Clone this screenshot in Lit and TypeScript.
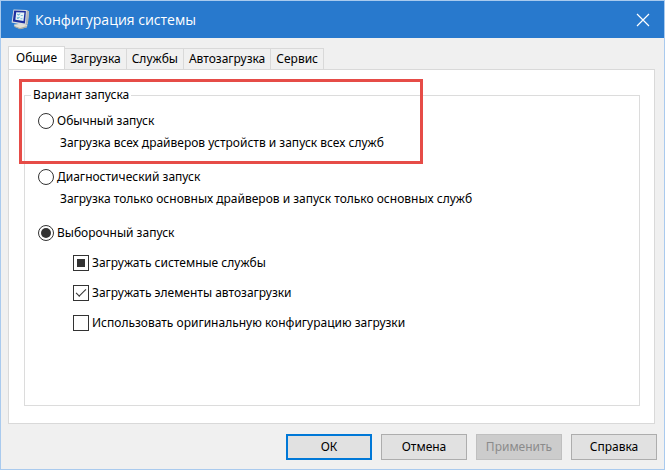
import { LitElement, html, css, svg } from "lit";
import { customElement, state } from "lit/decorators.js";
import { classMap } from "lit/directives/class-map.js";

const TABS = ["Общие", "Загрузка", "Службы", "Автозагрузка", "Сервис"];

const MODES = [
  {
    id: "normal",
    label: "Обычный запуск",
    note: "Загрузка всех драйверов устройств и запуск всех служб",
  },
  {
    id: "diagnostic",
    label: "Диагностический запуск",
    note: "Загрузка только основных драйверов и запуск только основных служб",
  },
  { id: "selective", label: "Выборочный запуск", note: "" },
];

const LOADS = [
  { id: "services", label: "Загружать системные службы", checked: false, mixed: true },
  { id: "startup", label: "Загружать элементы автозагрузки", checked: true, mixed: false },
  {
    id: "boot",
    label: "Использовать оригинальную конфигурацию загрузки",
    checked: false,
    mixed: false,
  },
];

const appIcon = svg`
  <path d="M3 15.5 L13 14.5 L16.5 16.5 L15.5 18.5 L9 20 L3.5 17.5 Z" fill="#e2e1d6" />
  <path d="M3.5 17 L9 19 L16 17 L15.5 18.5 L9 20.2 L3.5 18 Z" fill="#a9aaa2" />
  <path d="M2.5 0.5 L15.5 1 L18 2.6 L16.8 15 L14.6 16.4 L0.6 13.4 Z" fill="#d9dcdf" />
  <path d="M15.8 1.2 L18 2.6 L16.8 15 L14.6 16.4 Z" fill="#aeb2b6" />
  <path d="M3.2 1.4 L14.9 2 L13.9 14.6 L1.8 12.4 Z" fill="#1c2fa0" />
  <path d="M5.2 3.2 L13.4 3.6 L12.5 12 L4.4 10.8 Z" fill="#e4f3f8" />
  <path d="M6.3 5.2 L7.6 6.1 L8.8 4.6 M5.9 8.6 L7.2 9.5 L8.4 7.9" fill="none" stroke="#2f9ac4" />
  <path d="M9.8 6.5 H11.8 M9.5 9.7 H11.4" stroke="#7fbfd8" />`;

@customElement("app-root")
export class AppRoot extends LitElement {
  @state() private mode = "selective";
  @state() private tab = 0;

  static styles = css`
    :host {
      display: flex;
      flex-direction: column;
      box-sizing: border-box;
      min-height: 100vh;
      border: 1px solid #a9caee;
      background: #f0f0f0;
      color: #000;
      font: 12px/16px "Noto Sans", "Open Sans", sans-serif;
    }
    .titlebar {
      display: flex;
      align-items: center;
      height: 37px;
      padding: 0 14px 0 10px;
      background: #2879cd;
      color: #fff;
    }
    .app-icon {
      width: 19px;
      height: 21px;
    }
    .title {
      flex: 1;
      margin: 0 0 0 5px;
      font: 14px/20px "Open Sans", "Noto Sans", sans-serif;
    }
    .close {
      display: flex;
      padding: 0;
      border: 0;
      background: none;
      color: inherit;
    }
    .close-icon {
      width: 14px;
      height: 14px;
    }
    .tabs {
      display: flex;
      align-items: flex-end;
      padding: 8px 0 0 7px;
    }
    .tab {
      height: 21px;
      padding: 0 5px;
      border: 1px solid #d9d9d9;
      border-width: 1px 1px 0 0;
      background: #f0f0f0;
      color: inherit;
      font: inherit;
    }
    .tab.active {
      position: relative;
      height: 24px;
      margin-bottom: -1px;
      padding: 0 7px 2px;
      border-left-width: 1px;
      background: #fff;
    }
    .panel {
      position: relative;
      display: flex;
      flex: 1;
      margin: 0 9px 0 7px;
      padding: 17px 14px 17px 15px;
      border: 1px solid #d9d9d9;
      background: #fff;
    }
    .group {
      flex: 1;
      min-width: 0;
      margin: 0;
      padding: 10px 13px;
      border: 1px solid #dcdcdc;
    }
    .legend {
      margin-left: -7px;
      padding: 0 2px;
    }
    .mode {
      margin-bottom: 18px;
    }
    .mode:last-of-type {
      margin-bottom: 14px;
    }
    .option {
      display: flex;
      align-items: center;
      gap: 3px;
    }
    .note {
      margin: 6px 0 0 22px;
    }
    .radio,
    .check {
      display: grid;
      place-items: center;
      flex: none;
      box-sizing: border-box;
      width: 16px;
      height: 16px;
      margin: 0;
      border: 1px solid #333;
      background: #fff;
      appearance: none;
    }
    .radio {
      border-radius: 50%;
    }
    .radio:checked::before {
      width: 10px;
      height: 10px;
      border-radius: 50%;
      background: #333;
      content: "";
    }
    .check:indeterminate::before {
      width: 8px;
      height: 8px;
      background: #333;
      content: "";
    }
    .check:checked::before {
      width: 9px;
      height: 4px;
      margin-bottom: 3px;
      border: solid #333;
      border-width: 0 0 1px 1px;
      transform: rotate(-45deg);
      content: "";
    }
    .loads {
      display: flex;
      flex-direction: column;
      gap: 14px;
      padding-left: 35px;
    }
    .highlight {
      position: absolute;
      top: 9px;
      left: 10px;
      box-sizing: border-box;
      width: 404px;
      height: 85px;
      border: 3px solid #e64c47;
      pointer-events: none;
    }
    .actions {
      display: flex;
      justify-content: flex-end;
      gap: 9px;
      padding: 10px 7px 9px;
    }
    .action {
      width: 86px;
      height: 26px;
      padding: 0;
      border: 1px solid #adadad;
      background: #e1e1e1;
      color: inherit;
      font: inherit;
    }
    .action.primary {
      border: 2px solid #0078d7;
    }
    .action:disabled {
      border-color: #bfbfbf;
      background: #ccc;
      color: #8b8b8b;
    }
  `;

  render() {
    return html`
      <header class="titlebar">
        <svg class="app-icon" viewBox="0 0 19 21" aria-hidden="true">${appIcon}</svg>
        <h1 class="title">Конфигурация системы</h1>
        <button class="close" aria-label="Закрыть">
          <svg class="close-icon" viewBox="0 0 14 14" aria-hidden="true">
            <path d="M1 1 L13 13 M13 1 L1 13" stroke="#fff" stroke-width="1.2" />
          </svg>
        </button>
      </header>
      <div class="tabs" role="tablist">
        ${TABS.map(
          (name, i) => html`<button
            class=${classMap({ tab: true, active: i === this.tab })}
            role="tab"
            aria-selected=${i === this.tab}
            @click=${() => (this.tab = i)}
          >${name}</button>`
        )}
      </div>
      <main class="panel" role="tabpanel">
        <fieldset class="group">
          <legend class="legend">Вариант запуска</legend>
          ${MODES.map(
            (m) => html`<div class="mode">
              <label class="option">
                <input
                  class="radio"
                  type="radio"
                  name="mode"
                  .checked=${this.mode === m.id}
                  @change=${() => (this.mode = m.id)}
                />
                <span>${m.label}</span>
              </label>
              ${m.note ? html`<p class="note">${m.note}</p>` : null}
            </div>`
          )}
          <section class="loads">
            ${LOADS.map(
              (l) => html`<label class="option">
                <input
                  class="check"
                  type="checkbox"
                  name=${l.id}
                  .checked=${l.checked}
                  .indeterminate=${l.mixed}
                />
                <span>${l.label}</span>
              </label>`
            )}
          </section>
        </fieldset>
        <div class="highlight"></div>
      </main>
      <footer class="actions">
        <button class="action primary">ОК</button>
        <button class="action">Отмена</button>
        <button class="action" disabled>Применить</button>
        <button class="action">Справка</button>
      </footer>
    `;
  }
}
